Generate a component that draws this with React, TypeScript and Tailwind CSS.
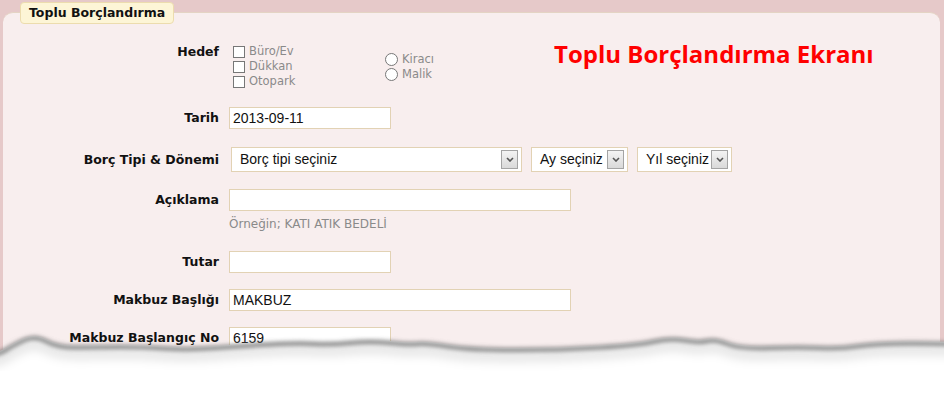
import React from "react";

const font = { fontFamily: '"DejaVu Sans", Verdana, sans-serif' };
const arial = { fontFamily: '"Liberation Sans", Arial, sans-serif' };

function Label({ text }: { text: string }) {
  return (
    <div
      className="w-[216px] shrink-0 text-right text-[12.5px] font-bold leading-[16px] text-[#111]"
      style={font}
    >
      {text}
    </div>
  );
}

function TextBox({ value, width }: { value?: string; width: string }) {
  return (
    <div
      className={`${width} ml-[10px] flex h-[22px] items-center border border-[#e2d2b4] bg-white px-[3px] text-[14px] text-[#111]`}
      style={arial}
    >
      {value}
    </div>
  );
}

function Chevron() {
  return (
    <div className="flex h-[19px] w-[17px] items-center justify-center border border-[#a4a4a4] bg-gradient-to-b from-[#f4f4f4] to-[#d9d9d9]">
      <svg width="8" height="5" viewBox="0 0 8 5">
        <path d="M1 1 L4 4 L7 1" stroke="#555" strokeWidth="1.6" fill="none" />
      </svg>
    </div>
  );
}

function SelectBox({ text, width }: { text: string; width: string }) {
  return (
    <div
      className={`${width} flex h-[25px] items-center justify-between border border-[#e2d2b4] bg-white pl-[8px] pr-[3px] text-[14px] text-[#111]`}
      style={arial}
    >
      <span>{text}</span>
      <Chevron />
    </div>
  );
}

function Check({ text }: { text: string }) {
  return (
    <div className="flex h-[15px] items-center gap-[4px]">
      <span className="h-[12px] w-[12px] border border-[#777] bg-white" />
      <span className="text-[11.5px] text-[#8a8a8a]" style={font}>
        {text}
      </span>
    </div>
  );
}

function Radio({ text }: { text: string }) {
  return (
    <div className="flex h-[15px] items-center gap-[4px]">
      <span className="h-[13px] w-[13px] rounded-full border border-[#777] bg-white" />
      <span className="text-[11.5px] text-[#8a8a8a]" style={font}>
        {text}
      </span>
    </div>
  );
}

function TornEdge() {
  // y values are relative to top 320
  const pts: [number, number][] = [
    [-10, 33], [0, 32], [12, 24], [35, 13], [58, 26], [100, 25], [140, 25], [190, 28],
    [240, 24], [300, 21], [330, 23], [370, 19], [410, 23], [425, 21], [470, 28],
    [560, 28], [640, 23], [670, 16], [700, 21], [715, 17], [740, 27], [800, 25],
    [840, 27], [880, 21], [954, 22],
  ];
  let line = `M${pts[0][0]} ${pts[0][1]}`;
  for (let i = 1; i < pts.length - 1; i++) {
    const mx = (pts[i][0] + pts[i + 1][0]) / 2;
    const my = (pts[i][1] + pts[i + 1][1]) / 2;
    line += ` Q${pts[i][0]} ${pts[i][1]} ${mx} ${my}`;
  }
  const last = pts[pts.length - 1];
  line += ` L${last[0]} ${last[1]}`;
  const fill = `${line} L954 90 L-10 90 Z`;
  return (
    <svg
      className="absolute left-0 top-[320px]"
      width="944"
      height="80"
      viewBox="0 0 944 80"
    >
      <defs>
        <filter id="b1" x="-5%" y="-50%" width="110%" height="200%">
          <feGaussianBlur stdDeviation="2" />
        </filter>
        <filter id="b2" x="-5%" y="-50%" width="110%" height="200%">
          <feGaussianBlur stdDeviation="5" />
        </filter>
      </defs>
      <path d={fill} fill="#fff" />
      <path d={line} transform="translate(0 9)" stroke="#000" strokeOpacity="0.1" strokeWidth="10" fill="none" filter="url(#b2)" />
      <path d={line} transform="translate(0 2)" stroke="#808080" strokeWidth="4" fill="none" filter="url(#b1)" strokeLinejoin="round" />
    </svg>
  );
}

export default function App() {
  return (
    <div className="relative h-[400px] w-[944px] overflow-hidden bg-[#e6c9c9] pl-[3px] pr-[4px] pt-[12px]">
      <div className="h-[400px] rounded-tl-[10px] rounded-tr-[10px] border-t border-[#e4d4c4] bg-[#f8eeee] pt-[31px]">
        {/* Hedef */}
        <div className="flex">
          <Label text="Hedef" />
          <div className="ml-[14px] w-[152px]">
            <Check text="Büro/Ev" />
            <Check text="Dükkan" />
            <Check text="Otopark" />
          </div>
          <div className="pt-[8px]">
            <Radio text="Kiracı" />
            <Radio text="Malik" />
          </div>
          <div
            className="ml-[120px] mt-[-2px] text-[24px] font-bold leading-[24px] text-[#ff0000]"
            style={{ fontFamily: '"Open Sans", sans-serif' }}
          >
            Toplu Borçlandırma Ekranı
          </div>
        </div>

        {/* Tarih */}
        <div className="mt-[18px] flex items-center">
          <Label text="Tarih" />
          <TextBox value="2013-09-11" width="w-[162px]" />
        </div>

        {/* Borç Tipi */}
        <div className="mt-[18px] flex items-center">
          <Label text="Borç Tipi & Dönemi" />
          <div className="ml-[12px] flex gap-[9px]">
            <SelectBox text="Borç tipi seçiniz" width="w-[291px]" />
            <SelectBox text="Ay seçiniz" width="w-[97px]" />
            <SelectBox text="Yıl seçiniz" width="w-[95px]" />
          </div>
        </div>

        {/* Açıklama */}
        <div className="mt-[17px] flex">
          <div className="flex h-[22px] items-center">
            <Label text="Açıklama" />
          </div>
          <div>
            <TextBox width="w-[342px]" />
            <div className="ml-[10px] mt-[6px] text-[12px] leading-[14px] text-[#8a8a8a]" style={font}>
              Örneğin; KATI ATIK BEDELİ
            </div>
          </div>
        </div>

        {/* Tutar */}
        <div className="mt-[20px] flex items-center">
          <Label text="Tutar" />
          <TextBox width="w-[162px]" />
        </div>

        {/* Makbuz Başlığı */}
        <div className="mt-[16px] flex items-center">
          <Label text="Makbuz Başlığı" />
          <TextBox value="MAKBUZ" width="w-[342px]" />
        </div>

        {/* Makbuz Başlangıç No */}
        <div className="mt-[16px] flex items-center">
          <Label text="Makbuz Başlangıç No" />
          <TextBox value="6159" width="w-[162px]" />
        </div>
      </div>

      <div
        className="absolute left-[20px] top-[2px] flex h-[22px] items-center rounded-[4px] border border-[#ecdcae] bg-[#fdf5d6] px-[8px] text-[12.5px] font-bold text-[#111]"
        style={font}
      >
        Toplu Borçlandırma
      </div>

      <TornEdge />
    </div>
  );
}
